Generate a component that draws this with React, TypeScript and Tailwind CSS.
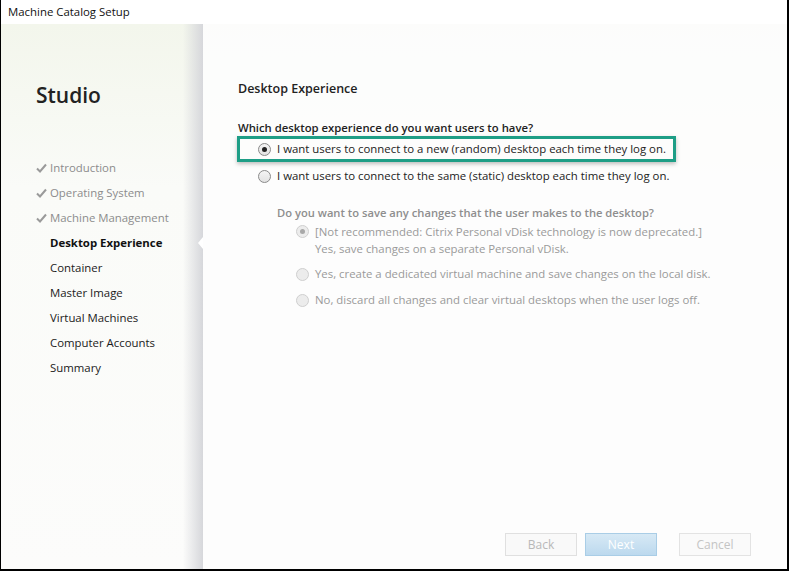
import React from 'react';

const font = { fontFamily: '"Open Sans", "Noto Sans", sans-serif' };

const steps = [
  { label: 'Introduction', done: true },
  { label: 'Operating System', done: true },
  { label: 'Machine Management', done: true },
  { label: 'Desktop Experience', current: true },
  { label: 'Container' },
  { label: 'Master Image' },
  { label: 'Virtual Machines' },
  { label: 'Computer Accounts' },
  { label: 'Summary' },
];

const Check = () => (
  <svg width="11" height="10" viewBox="0 0 11 10" className="shrink-0">
    <path d="M1 5.5 L4 8.5 L10 1.5" fill="none" stroke="#9a9a9a" strokeWidth="2" />
  </svg>
);

const Radio: React.FC<{ checked?: boolean; disabled?: boolean }> = ({ checked, disabled }) => (
  <span
    className={`w-[13px] h-[13px] rounded-full border flex items-center justify-center shrink-0 ${
      disabled ? 'border-[#cfcfcf] bg-[#ececec]' : 'border-[#8a8a8a] bg-gradient-to-b from-[#f4f4f4] to-[#e2e2e2]'
    }`}
  >
    {checked && <span className={`w-[5px] h-[5px] rounded-full ${disabled ? 'bg-[#a8a8a8]' : 'bg-[#222]'}`} />}
  </span>
);

const App: React.FC = () => {
  return (
    <div
      className="w-[789px] h-[571px] flex flex-col border-l border-r-2 border-b-2 border-black overflow-hidden text-[11.4px] whitespace-nowrap"
      style={font}
    >
      <div className="h-[24px] bg-white flex items-center px-[7px] text-[#111]">Machine Catalog Setup</div>

      <div className="flex-1 flex bg-gradient-to-b from-[#f3f6ec] via-[#fafbf8] via-[30%] to-[#fcfcfb]">
        {/* left step list */}
        <aside className="w-[202px] relative flex flex-col bg-gradient-to-r from-transparent via-transparent via-[90%] to-[#d6d7db]">
          <div className="pl-[35px] pt-[57px] text-[21px] font-semibold text-[#222] leading-[28px]">Studio</div>
          <ul className="mt-[46px] flex flex-col">
            {steps.map(s => (
              <li key={s.label} className="h-[25px] flex items-center relative">
                <span className="w-[49px] pl-[35px] flex items-center">{s.done && <Check />}</span>
                <span
                  className={
                    s.current ? 'font-bold text-[#111]' : s.done ? 'text-[#8c8c8c]' : 'text-[#1a1a1a]'
                  }
                >
                  {s.label}
                </span>
                {s.current && (
                  <span className="absolute right-0 top-[7px] w-0 h-0 border-y-[6px] border-y-transparent border-r-[5px] border-r-white" />
                )}
              </li>
            ))}
          </ul>
        </aside>

        {/* main content */}
        <main className="flex-1 flex flex-col bg-[#fdfdfd]/90 pl-[35px] pr-[37px]">
          <h2 className="pt-[56px] text-[12.5px] font-semibold text-[#222] leading-[18px]">Desktop Experience</h2>

          <p className="mt-[22px] font-semibold text-[#222] text-[11.3px] leading-[16px]">
            Which desktop experience do you want users to have?
          </p>

          <div className="w-[439px] h-[26px] border-[3px] border-[#1e9e86] shadow-[0_2px_4px_rgba(0,0,0,0.25)] flex items-center pl-[18px] gap-[6px] -ml-[1px] text-[#222]">
            <Radio checked />
            <span>I want users to connect to a new (random) desktop each time they log on.</span>
          </div>

          <div className="mt-[6px] h-[16px] flex items-center pl-[20px] gap-[6px] text-[#222]">
            <Radio />
            <span>I want users to connect to the same (static) desktop each time they log on.</span>
          </div>

          <p className="mt-[20px] pl-[39px] font-semibold text-[11.2px] text-[#8e8e8e] leading-[18px]">
            Do you want to save any changes that the user makes to the desktop?
          </p>

          <div className="pl-[58px] flex flex-col text-[#9a9a9a]">
            <div className="mt-[1px] flex items-start gap-[6px]">
              <span className="mt-[2px]"><Radio checked disabled /></span>
              <span className="leading-[17px]">
                [Not recommended: Citrix Personal vDisk technology is now deprecated.]
                <br />
                Yes, save changes on a separate Personal vDisk.
              </span>
            </div>
            <div className="mt-[8px] flex items-center gap-[6px] h-[18px]">
              <Radio disabled />
              <span>Yes, create a dedicated virtual machine and save changes on the local disk.</span>
            </div>
            <div className="mt-[8px] flex items-center gap-[6px] h-[18px]">
              <Radio disabled />
              <span>No, discard all changes and clear virtual desktops when the user logs off.</span>
            </div>
          </div>

          <div className="mt-auto mb-[13px] flex justify-end -mr-[1px]">
            <button className="w-[72px] h-[23px] border border-[#e0e0e0] bg-[#f9f9f9] text-[#b8b8b8] text-[12px]">Back</button>
            <button className="ml-[8px] w-[72px] h-[23px] border border-[#a9cde6] bg-gradient-to-b from-[#d7e9f5] to-[#bcd9ee] text-white text-[12px]">
              Next
            </button>
            <button className="ml-[22px] w-[72px] h-[23px] border border-[#e3e3e3] bg-[#fafafa] text-[#c4c4c4] text-[12px]">Cancel</button>
          </div>
        </main>
      </div>
    </div>
  );
};

export default App;
